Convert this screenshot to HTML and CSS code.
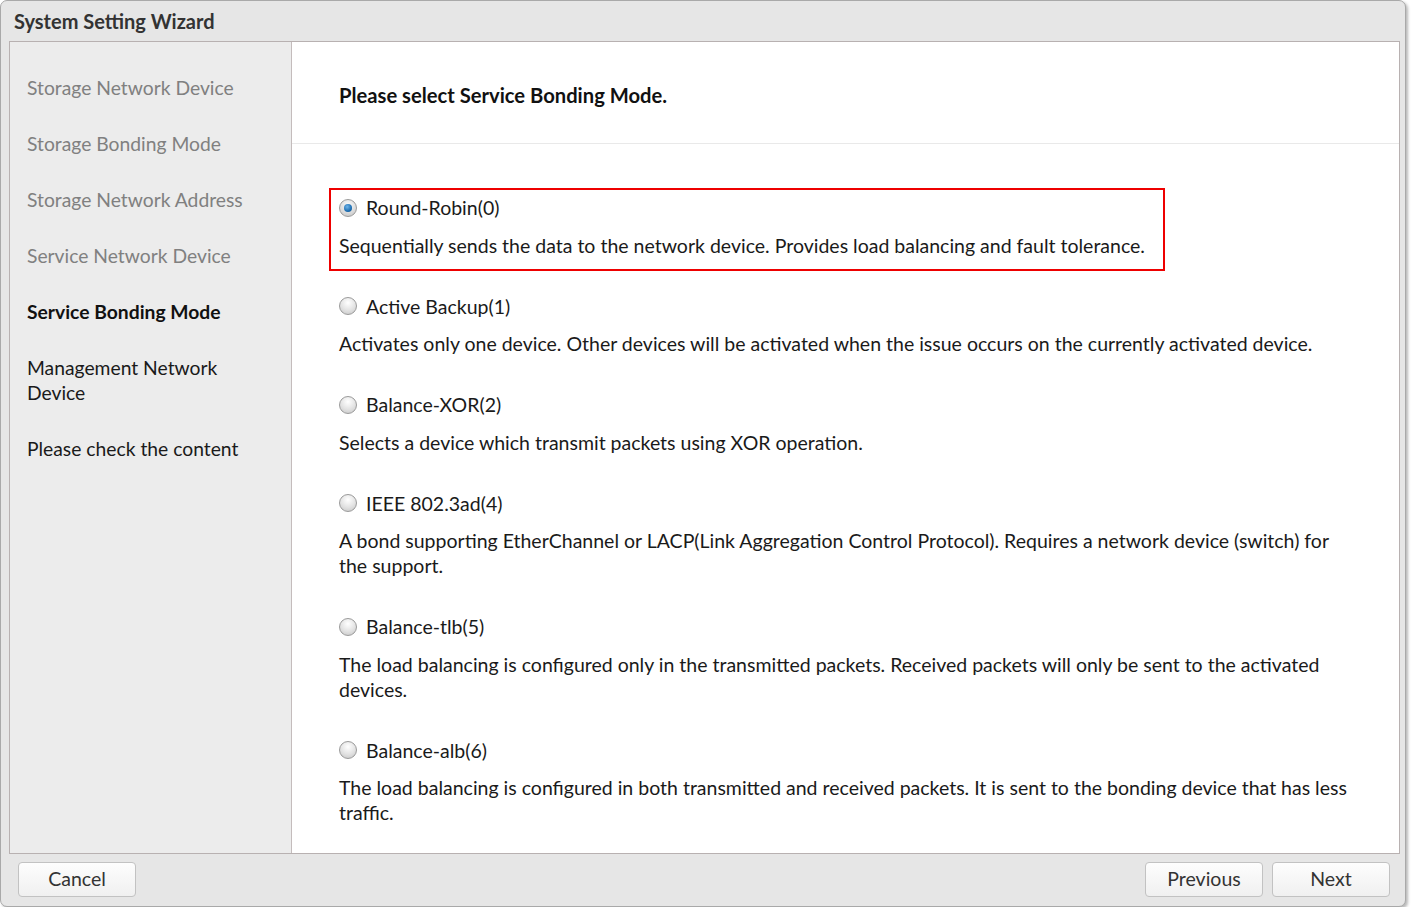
FILE: index.html
```
<!DOCTYPE html>
<html>
<head>
<meta charset="utf-8">
<title>System Setting Wizard</title>
<link rel="stylesheet" href="styles.css">
</head>
<body>
<div class="window">
  <div class="titlebar">System Setting Wizard</div>
  <div class="frame">
    <ul class="steps">
      <li class="step done">Storage Network Device</li>
      <li class="step done">Storage Bonding Mode</li>
      <li class="step done">Storage Network Address</li>
      <li class="step done">Service Network Device</li>
      <li class="step current">Service Bonding Mode</li>
      <li class="step">Management Network Device</li>
      <li class="step">Please check the content</li>
    </ul>
    <div class="content">
      <div class="heading">Please select Service Bonding Mode.</div>
      <div class="options">
        <label class="option selected">
          <span class="opt-title"><span class="radio checked"></span>Round-Robin(0)</span>
          <span class="opt-desc">Sequentially sends the data to the network device. Provides load balancing and fault tolerance.</span>
        </label>
        <label class="option">
          <span class="opt-title"><span class="radio"></span>Active Backup(1)</span>
          <span class="opt-desc">Activates only one device. Other devices will be activated when the issue occurs on the currently activated device.</span>
        </label>
        <label class="option">
          <span class="opt-title"><span class="radio"></span>Balance-XOR(2)</span>
          <span class="opt-desc">Selects a device which transmit packets using XOR operation.</span>
        </label>
        <label class="option">
          <span class="opt-title"><span class="radio"></span>IEEE 802.3ad(4)</span>
          <span class="opt-desc">A bond supporting EtherChannel or LACP(Link Aggregation Control Protocol). Requires a network device (switch) for the support.</span>
        </label>
        <label class="option">
          <span class="opt-title"><span class="radio"></span>Balance-tlb(5)</span>
          <span class="opt-desc">The load balancing is configured only in the transmitted packets. Received packets will only be sent to the activated devices.</span>
        </label>
        <label class="option">
          <span class="opt-title"><span class="radio"></span>Balance-alb(6)</span>
          <span class="opt-desc">The load balancing is configured in both transmitted and received packets. It is sent to the bonding device that has less traffic.</span>
        </label>
      </div>
    </div>
  </div>
  <div class="footer">
    <button class="btn">Cancel</button>
    <div class="right-btns">
      <button class="btn">Previous</button>
      <button class="btn">Next</button>
    </div>
  </div>
</div>
</body>
</html>
```
FILE: styles.css
```
html, body {
  margin: 0;
  padding: 0;
  background: #ffffff;
}
body {
  font-family: Lato, "Open Sans", sans-serif;
  color: #1a1a1a;
}
.window {
  width: 1404px;
  height: 905px;
  background: #e6e6e6;
  border: 1px solid #a9a9a9;
  border-radius: 7px;
  box-shadow: 2px 2px 3px rgba(0,0,0,0.28);
  display: flex;
  flex-direction: column;
  overflow: hidden;
}
.titlebar {
  height: 40px;
  line-height: 40px;
  padding-left: 13px;
  font-size: 20px;
  font-weight: 700;
  color: #333;
}
.frame {
  margin: 0 5px 0 8px;
  height: 811px;
  border: 1px solid #b8b1b1;
  display: flex;
  background: #fff;
}
.steps {
  list-style: none;
  margin: 0;
  padding: 18px 0 0 0;
  width: 281px;
  background: #ececec;
  border-right: 1px solid #c4bcbc;
}
.step {
  padding: 15px 16px 16px 17px;
  font-size: 19.3px;
  line-height: 25px;
  color: #1a1a1a;
}
.step.done {
  color: #808080;
}
.step.current {
  font-weight: 700;
  color: #111;
}
.content {
  flex: 1;
  display: flex;
  flex-direction: column;
  min-width: 0;
}
.heading {
  height: 102px;
  flex: none;
  box-sizing: border-box;
  border-bottom: 1px solid #e9e9e9;
  padding-left: 47px;
  font-size: 20.2px;
  font-weight: 700;
  line-height: 106px;
  color: #111;
}
.options {
  padding: 44px 30px 0 37px;
  display: flex;
  flex-direction: column;
  align-items: flex-start;
  gap: 16px;
}
.option {
  display: flex;
  flex-direction: column;
  gap: 12.5px;
  padding: 5px 18px 11px 8px;
  border: 2px solid transparent;
  font-size: 19.5px;
  line-height: 25px;
}
.option.selected {
  border-color: #ee0000;
}
.opt-title {
  display: flex;
  align-items: center;
}
.radio {
  width: 16px;
  height: 16px;
  border-radius: 50%;
  border: 1px solid #9a9a9a;
  background: radial-gradient(circle at 50% 30%, #ffffff 0%, #e2e2e2 55%, #c4c4c4 100%);
  margin: 0 9px 0 0;
  position: relative;
  flex: none;
}
.radio.checked {
  background: radial-gradient(circle at 50% 30%, #fafafa 0%, #dadada 60%, #c0c0c0 100%);
}
.radio.checked::after {
  content: "";
  position: absolute;
  left: 4px;
  top: 4px;
  width: 8px;
  height: 8px;
  border-radius: 50%;
  background: radial-gradient(circle at 40% 35%, #6fb4e8 0%, #1f6fb2 60%, #0d4f8a 100%);
}
.footer {
  flex: 1;
  display: flex;
  justify-content: space-between;
  align-items: flex-start;
  padding: 8px 15px 0 17px;
}
.right-btns {
  display: flex;
  gap: 9px;
}
.btn {
  width: 118px;
  height: 35px;
  border: 1px solid #c2c2c2;
  border-radius: 4px;
  background: linear-gradient(#fdfdfd, #f0f0f0);
  font-family: Lato, "Open Sans", sans-serif;
  font-size: 19.5px;
  color: #333;
  padding: 0 0 2px 0;
}
```
